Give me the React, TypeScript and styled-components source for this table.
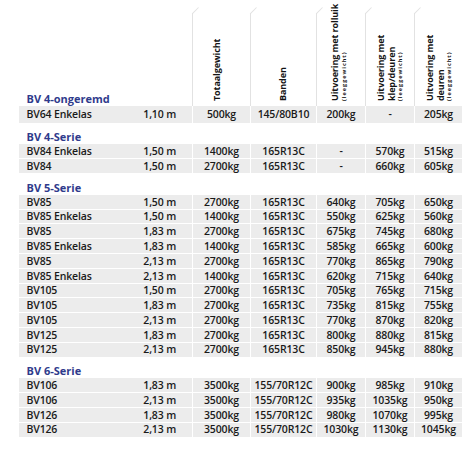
import React from 'react';
import styled, { createGlobalStyle } from 'styled-components';

const GlobalStyle = createGlobalStyle`
  html, body { margin: 0; padding: 0; background: #ffffff; }
  body { font-family: "Open Sans", "Liberation Sans", sans-serif; }
`;

const COLS = '116px 57px 58px 66px 49px 49px 48px';
const BLUE = '#2f3b8c';
const GREY = '#ececec';
const LINE = '#e2e2e2';

const Page = styled.div`
  width: 463px;
  height: 449px;
  padding-left: 19px;
  box-sizing: border-box;
  overflow: hidden;
  color: #1a1a1a;
`;

const HeaderGrid = styled.div`
  display: grid;
  grid-template-columns: ${COLS};
  height: 106px;
  align-items: end;
`;

const HeaderHeading = styled.div`
  grid-column: span 2;
  padding-left: 7.5px;
  padding-bottom: 1px;
  font-weight: 700;
  font-size: 11px;
  line-height: 12px;
  color: ${BLUE};
  white-space: nowrap;
`;

const HeadCell = styled.div`
  position: relative;
  height: 93px;
  box-sizing: border-box;
  border-left: 1px solid ${LINE};
  padding-bottom: 5px;
  display: flex;
  justify-content: center;
  align-items: stretch;
  &::before {
    content: '';
    position: absolute;
    left: -1px;
    bottom: 100%;
    width: 1px;
    height: 8.5px;
    background: ${LINE};
    transform-origin: bottom center;
    transform: rotate(45deg);
  }
`;

const Label = styled.div<{ $shift?: number }>`
  writing-mode: vertical-rl;
  transform: rotate(180deg);
  white-space: nowrap;
  height: 100%;
  font-weight: 700;
  font-size: 9px;
  letter-spacing: -0.1px;
  line-height: 10.5px;
  color: #141414;
  margin-right: ${p => p.$shift ?? 0}px;
`;

const LabelMain = styled.span`
  display: block;
`;

const LabelSub = styled.span`
  display: block;
  font-size: 5.5px;
  letter-spacing: 1px;
  line-height: 6.5px;
`;

const SectionHeading = styled.div`
  height: 20.8px;
  box-sizing: border-box;
  display: flex;
  align-items: flex-end;
  padding-left: 7.5px;
  padding-bottom: 1px;
  font-weight: 700;
  font-size: 11px;
  line-height: 12px;
  color: ${BLUE};
  white-space: nowrap;
`;

const Row = styled.div<{ $tall?: boolean }>`
  display: grid;
  grid-template-columns: ${COLS};
  height: ${p => (p.$tall ? '16.7px' : '13.8px')};
  margin-bottom: 1px;
  font-size: 10.5px;
  font-weight: 600;
  letter-spacing: -0.15px;
  line-height: 1;
  white-space: nowrap;
`;

const NameCell = styled.div`
  background: ${GREY};
  display: flex;
  align-items: center;
  padding-left: 7.5px;
`;

const LengthCell = styled.div`
  background: ${GREY};
  display: flex;
  align-items: center;
  padding-left: 8.3px;
`;

const ValueCell = styled.div`
  background: ${GREY};
  border-left: 1px solid #ffffff;
  display: flex;
  align-items: center;
  justify-content: center;
`;

type Item = [string, string, string, string, string, string, string];

type Section = { title: string; rows: Item[] };

const sections: Section[] = [
  {
    title: 'BV 4-ongeremd',
    rows: [['BV64 Enkelas', '1,10 m', '500kg', '145/80B10', '200kg', '-', '205kg']],
  },
  {
    title: 'BV 4-Serie',
    rows: [
      ['BV84 Enkelas', '1,50 m', '1400kg', '165R13C', '-', '570kg', '515kg'],
      ['BV84', '1,50 m', '2700kg', '165R13C', '-', '660kg', '605kg'],
    ],
  },
  {
    title: 'BV 5-Serie',
    rows: [
      ['BV85', '1,50 m', '2700kg', '165R13C', '640kg', '705kg', '650kg'],
      ['BV85 Enkelas', '1,50 m', '1400kg', '165R13C', '550kg', '625kg', '560kg'],
      ['BV85', '1,83 m', '2700kg', '165R13C', '675kg', '745kg', '680kg'],
      ['BV85 Enkelas', '1,83 m', '1400kg', '165R13C', '585kg', '665kg', '600kg'],
      ['BV85', '2,13 m', '2700kg', '165R13C', '770kg', '865kg', '790kg'],
      ['BV85 Enkelas', '2,13 m', '1400kg', '165R13C', '620kg', '715kg', '640kg'],
      ['BV105', '1,50 m', '2700kg', '165R13C', '705kg', '765kg', '715kg'],
      ['BV105', '1,83 m', '2700kg', '165R13C', '735kg', '815kg', '755kg'],
      ['BV105', '2,13 m', '2700kg', '165R13C', '770kg', '870kg', '820kg'],
      ['BV125', '1,83 m', '2700kg', '165R13C', '800kg', '880kg', '815kg'],
      ['BV125', '2,13 m', '2700kg', '165R13C', '850kg', '945kg', '880kg'],
    ],
  },
  {
    title: 'BV 6-Serie',
    rows: [
      ['BV106', '1,83 m', '3500kg', '155/70R12C', '900kg', '985kg', '910kg'],
      ['BV106', '2,13 m', '3500kg', '155/70R12C', '935kg', '1035kg', '950kg'],
      ['BV126', '1,83 m', '3500kg', '155/70R12C', '980kg', '1070kg', '995kg'],
      ['BV126', '2,13 m', '3500kg', '155/70R12C', '1030kg', '1130kg', '1045kg'],
    ],
  },
];

const DataRow: React.FC<{ item: Item; tall?: boolean }> = ({ item, tall }) => (
  <Row $tall={tall}>
    <NameCell>{item[0]}</NameCell>
    <LengthCell>{item[1]}</LengthCell>
    {item.slice(2).map((v, i) => (
      <ValueCell key={i}>{v}</ValueCell>
    ))}
  </Row>
);

export default function App() {
  const [first, ...rest] = sections;
  return (
    <>
      <GlobalStyle />
      <Page>
        <HeaderGrid>
          <HeaderHeading>{first.title}</HeaderHeading>
          <HeadCell>
            <Label $shift={9}>
              <LabelMain>Totaalgewicht</LabelMain>
            </Label>
          </HeadCell>
          <HeadCell>
            <Label>
              <LabelMain>Banden</LabelMain>
            </Label>
          </HeadCell>
          <HeadCell>
            <Label $shift={6}>
              <LabelMain>Uitvoering met rolluik</LabelMain>
              <LabelSub>(leeggewicht)</LabelSub>
            </Label>
          </HeadCell>
          <HeadCell>
            <Label>
              <LabelMain>Uitvoering met</LabelMain>
              <LabelMain>klep/deuren</LabelMain>
              <LabelSub>(leeggewicht)</LabelSub>
            </Label>
          </HeadCell>
          <HeadCell>
            <Label>
              <LabelMain>Uitvoering met</LabelMain>
              <LabelMain>deuren</LabelMain>
              <LabelSub>(leeggewicht)</LabelSub>
            </Label>
          </HeadCell>
        </HeaderGrid>
        {first.rows.map((r, i) => (
          <DataRow key={i} item={r} tall />
        ))}
        {rest.map(s => (
          <React.Fragment key={s.title}>
            <SectionHeading>{s.title}</SectionHeading>
            {s.rows.map((r, i) => (
              <DataRow key={i} item={r} />
            ))}
          </React.Fragment>
        ))}
      </Page>
    </>
  );
}
